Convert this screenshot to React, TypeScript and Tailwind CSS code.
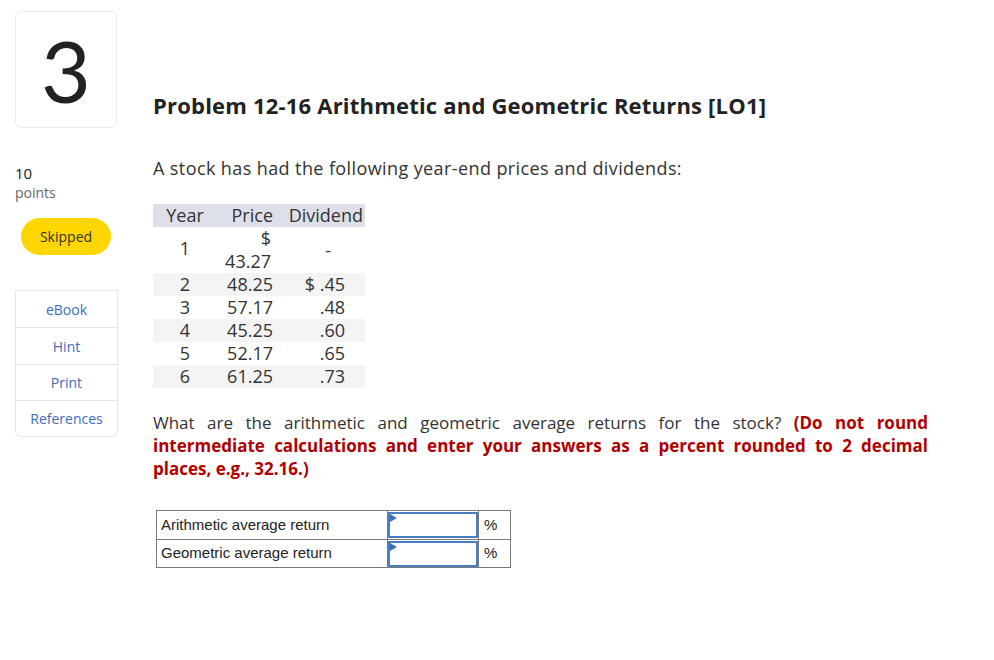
import React from "react";

const rows = [
  { year: "2", price: "48.25", div: "$ .45", shade: true },
  { year: "3", price: "57.17", div: ".48", shade: false },
  { year: "4", price: "45.25", div: ".60", shade: true },
  { year: "5", price: "52.17", div: ".65", shade: false },
  { year: "6", price: "61.25", div: ".73", shade: true },
];

function AnswerInput() {
  return (
    <div className="relative h-[26px] w-[90px] border-2 border-[#4a7cc4] bg-white">
      <span className="absolute left-0 top-0 h-0 w-0 border-y-[4px] border-l-[7px] border-y-transparent border-l-[#3f6fb8]" />
    </div>
  );
}

export default function App() {
  return (
    <div className="flex min-h-[660px] w-[994px] bg-white font-['Open_Sans',sans-serif] text-[#2d2d2d]">
      <aside className="ml-[15px] mt-[11px] flex w-[103px] flex-col">
        <div className="flex h-[117px] w-[102px] items-center justify-center rounded-md border border-[#ececec]">
          <span className="font-['Lato',sans-serif] text-[86px] font-normal leading-none text-[#222]">3</span>
        </div>
        <div className="mt-[36px] text-[15px] leading-[18px] text-[#222]">10</div>
        <div className="text-[14px] leading-[22px] text-[#666]">points</div>
        <div className="ml-[6px] mt-[14px] flex h-[37px] w-[90px] items-center justify-center rounded-full bg-[#ffd600] text-[14px] text-[#333]">
          Skipped
        </div>
        <div className="mt-[35px] flex w-[103px] flex-col rounded-b-md border border-[#e6e6e6] text-[14px] text-[#3d6cbf]">
          <div className="flex h-[37px] items-center justify-center border-b border-[#e6e6e6]">eBook</div>
          <div className="flex h-[37px] items-center justify-center border-b border-[#e6e6e6]">Hint</div>
          <div className="flex h-[36px] items-center justify-center border-b border-[#e6e6e6]">Print</div>
          <div className="flex h-[35px] items-center justify-center">References</div>
        </div>
      </aside>

      <main className="ml-[35px] mt-[90px] w-[775px]">
        <h1 className="text-[22px] font-bold leading-[30px] tracking-[0.2px] text-[#222]">
          Problem 12-16 Arithmetic and Geometric Returns [LO1]
        </h1>
        <p className="mt-[35px] text-[18px] leading-[26px] tracking-[0.4px] text-[#333]">
          A stock has had the following year-end prices and dividends:
        </p>

        <table className="mt-[23px] border-collapse text-[18px] leading-[23px] text-[#333]">
          <thead>
            <tr className="bg-[#dde0e9]">
              <th className="w-[62px] pl-[2px] text-center font-normal">Year</th>
              <th className="w-[62px] pr-[4px] text-right font-normal">Price</th>
              <th className="w-[88px] pr-[2px] text-right font-normal">Dividend</th>
            </tr>
          </thead>
          <tbody>
            <tr>
              <td className="pb-[4px] pl-[2px] text-center align-middle">1</td>
              <td className="pr-[6px] text-right">
                <div>$</div>
                <div>43.27</div>
              </td>
              <td className="pr-[34px] text-right">-</td>
            </tr>
            {rows.map((r) => (
              <tr key={r.year} className={r.shade ? "bg-[#f4f4f4]" : "bg-white"}>
                <td className="pl-[2px] text-center">{r.year}</td>
                <td className="pr-[4px] text-right">{r.price}</td>
                <td className="pr-[20px] text-right">{r.div}</td>
              </tr>
            ))}
          </tbody>
        </table>

        <p className="mt-[23px] w-[775px] text-justify text-[17px] leading-[23px] text-[#333]">
          What are the arithmetic and geometric average returns for the stock?{" "}
          <strong className="font-bold text-[#b00000]">
            (Do not round intermediate calculations and enter your answers as a percent rounded to 2 decimal places, e.g., 32.16.)
          </strong>
        </p>

        <table className="ml-[3px] mt-[30px] border-collapse font-['Liberation_Sans',Arial,sans-serif] text-[15px] text-[#222]">
          <tbody>
            <tr>
              <td className="h-[29px] w-[231px] border border-[#7a7a7a] pl-[4px]">Arithmetic average return</td>
              <td className="w-[90px] border border-[#7a7a7a] p-0">
                <AnswerInput />
              </td>
              <td className="w-[32px] border border-[#7a7a7a] pl-[5px]">%</td>
            </tr>
            <tr>
              <td className="h-[28px] border border-[#7a7a7a] pl-[4px]">Geometric average return</td>
              <td className="border border-[#7a7a7a] p-0">
                <AnswerInput />
              </td>
              <td className="border border-[#7a7a7a] pl-[5px]">%</td>
            </tr>
          </tbody>
        </table>
      </main>
    </div>
  );
}
